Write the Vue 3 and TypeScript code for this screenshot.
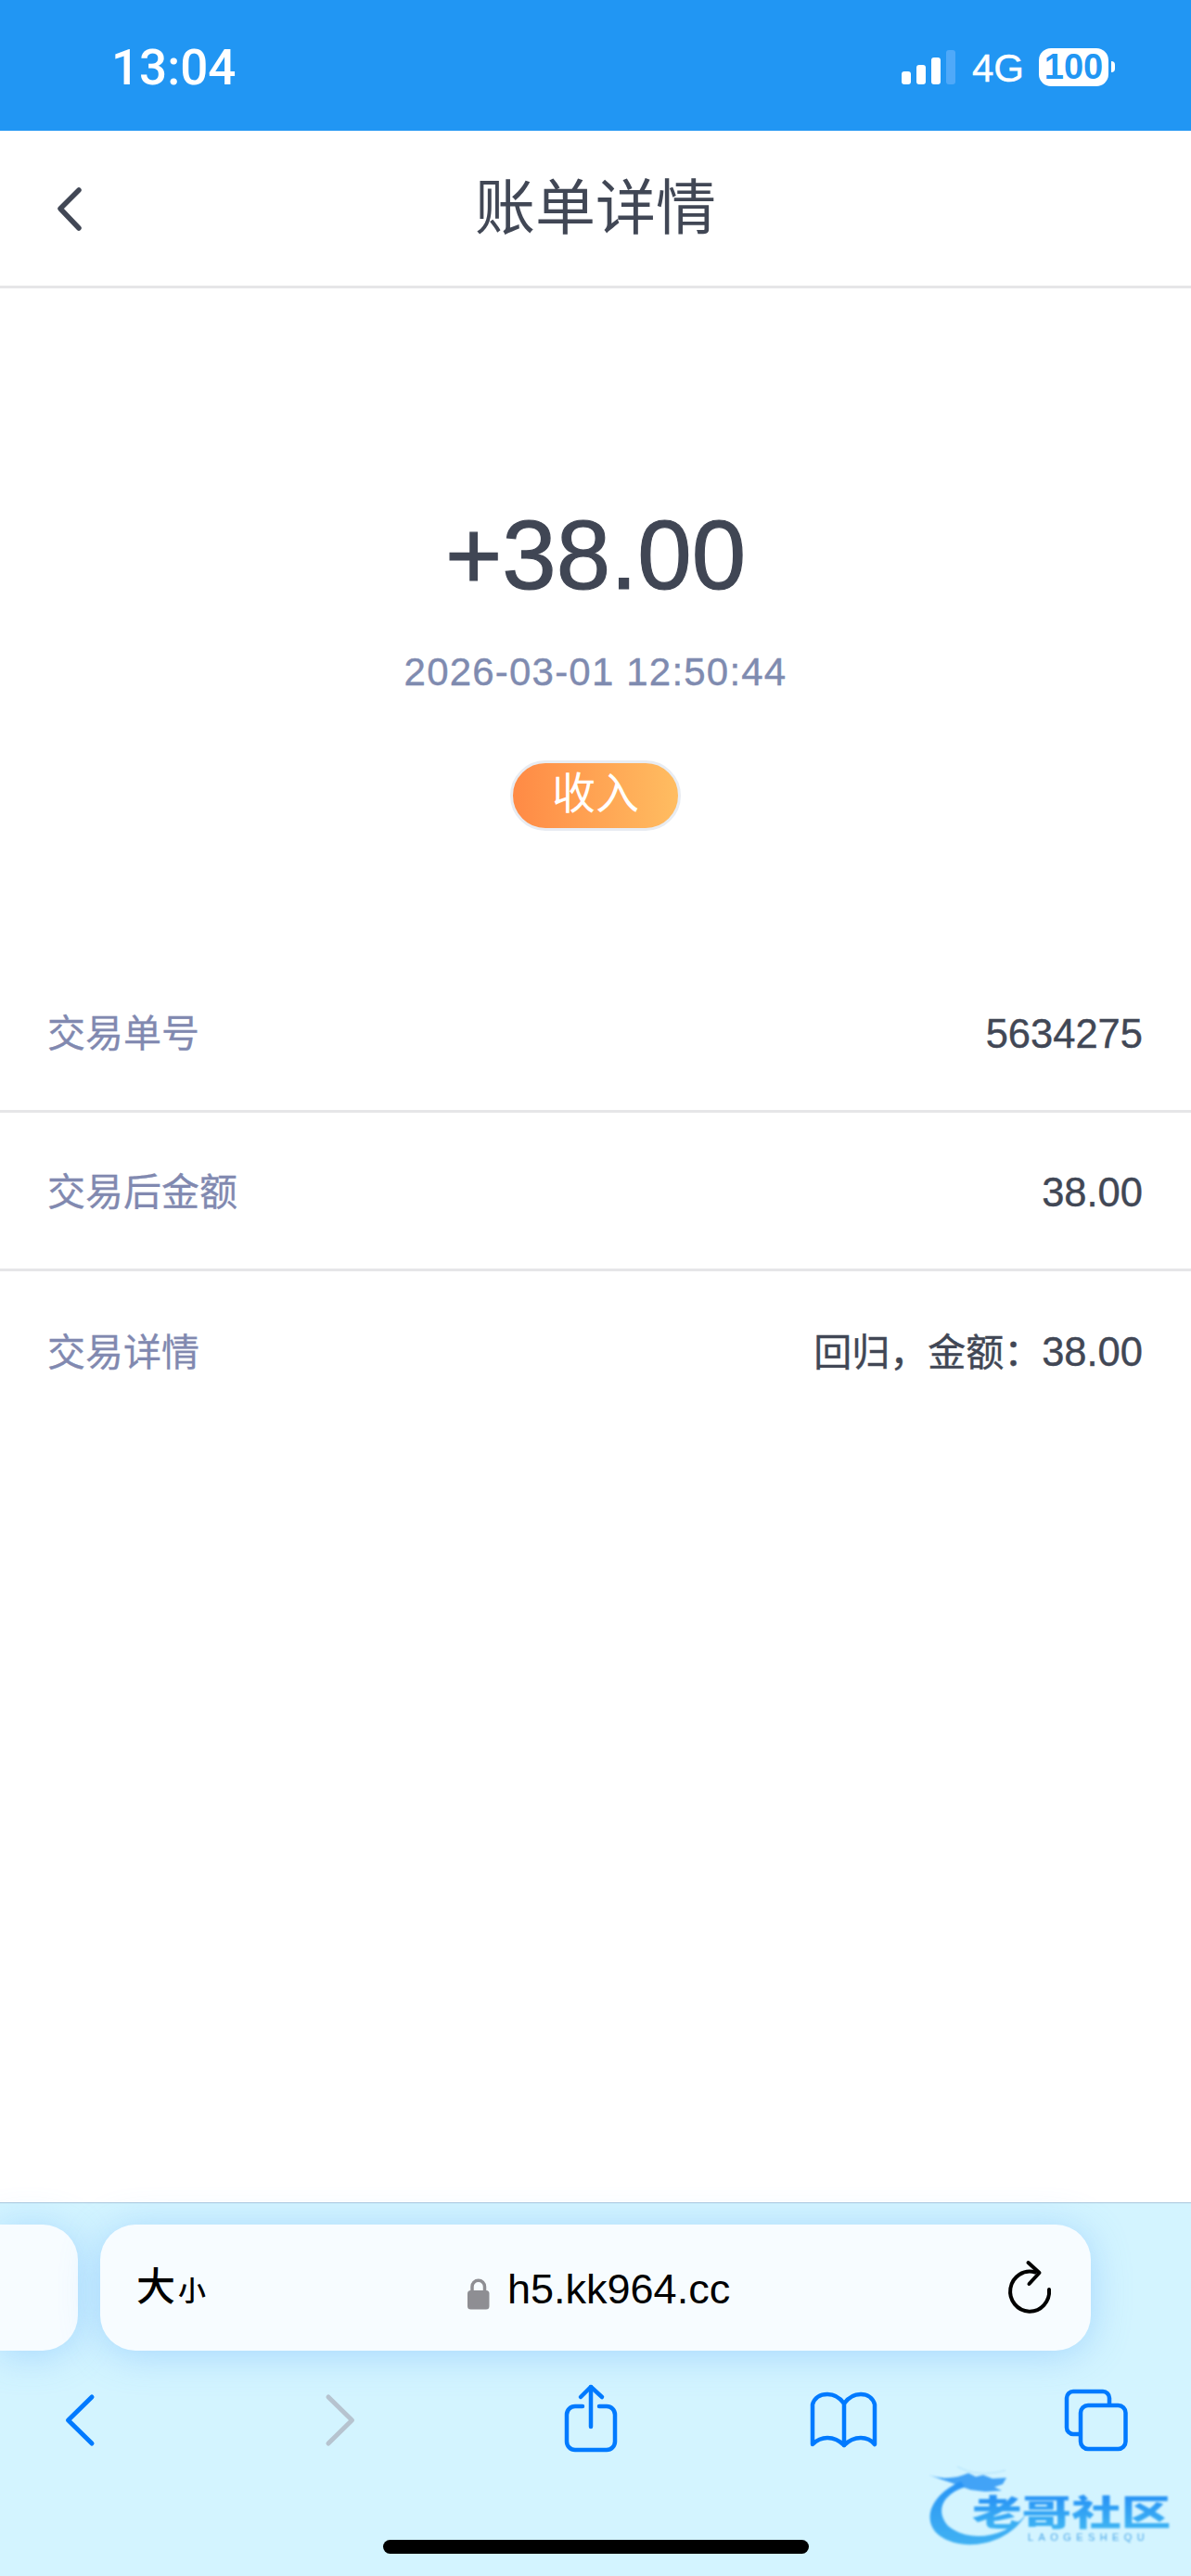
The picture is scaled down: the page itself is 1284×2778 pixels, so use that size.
<script setup lang="ts">
interface BillRow {
  label: string
  prefix?: string
  value: string
}

const rows: BillRow[] = [
  { label: '交易单号', value: '5634275' },
  { label: '交易后金额', value: '38.00' },
  { label: '交易详情', prefix: '回归，金额：', value: '38.00' },
]
</script>

<template>
  <div class="page">
    <!-- Status bar -->
    <div class="status">
      <span class="time">13:04</span>
      <div class="status-right">
        <div class="signal">
          <i class="b1"></i><i class="b2"></i><i class="b3"></i><i class="b4"></i>
        </div>
        <span class="net">4G</span>
        <div class="battery">100</div>
        <i class="battery-tip"></i>
      </div>
    </div>

    <!-- Header -->
    <header class="nav">
      <svg class="back" width="30" height="50" viewBox="60 200 30 50" fill="none" stroke="#414755" stroke-width="5.5" stroke-linecap="round" stroke-linejoin="round">
        <path d="M85 205L65 225L85 246" />
      </svg>
      <h1 class="title">账单详情</h1>
    </header>

    <!-- Amount -->
    <section class="hero">
      <div class="amount">+38.00</div>
      <div class="date">2026-03-01 12:50:44</div>
      <div class="tag">收入</div>
    </section>

    <!-- Detail rows -->
    <section class="list">
      <div v-for="row in rows" :key="row.label" class="row">
        <span class="label">{{ row.label }}</span>
        <span class="value"><span v-if="row.prefix" class="prefix">{{ row.prefix }}</span>{{ row.value }}</span>
      </div>
    </section>

    <div class="spacer"></div>

    <!-- Safari toolbar -->
    <footer class="browser">
      <div class="tabs-row">
        <div class="side-card"></div>
        <div class="address">
          <span class="aa">大<small>小</small></span>
          <div class="url">
            <svg width="24" height="34" viewBox="504 2450 24 34">
              <path d="M509 2464v-5a6.5 6.5 0 0 1 13.500 0v5" fill="none" stroke="#8e8e93" stroke-width="3.500" />
              <rect x="504" y="2463" width="23.500" height="20.500" rx="3.500" fill="#8e8e93" />
            </svg>
            <span>h5.kk964.cc</span>
          </div>
          <svg class="reload" width="50" height="60" viewBox="1085 2436 50 60" fill="none" stroke="#000" stroke-width="4" stroke-linecap="round" stroke-linejoin="round">
            <path d="M1131 2468A21 21.500 0 1 1 1116 2449.500" />
            <path d="M1108.500 2439L1120.500 2450L1109.500 2462" />
          </svg>
        </div>
      </div>

      <div class="toolbar">
        <svg width="70" height="80" viewBox="51 2570 70 80" fill="none" stroke="#007aff" stroke-width="5" stroke-linecap="round" stroke-linejoin="round">
          <path d="M99 2585L73.500 2610L99 2635" />
        </svg>
        <svg width="70" height="80" viewBox="325 2570 70 80" fill="none" stroke="#b6c3cf" stroke-width="5" stroke-linecap="round" stroke-linejoin="round">
          <path d="M354 2585L379.500 2610L354 2635" />
        </svg>
        <svg width="70" height="80" viewBox="598 2570 70 80" fill="none" stroke="#007aff" stroke-width="4.500" stroke-linecap="round" stroke-linejoin="round">
          <path d="M627 2595H619a9 9 0 0 0 -9 9V2633a9 9 0 0 0 9 9H653a9 9 0 0 0 9 -9V2604a9 9 0 0 0 -9 -9H645" />
          <path d="M636 2617V2574" />
          <path d="M625 2585L636 2574L648 2585" />
        </svg>
        <svg width="70" height="80" viewBox="872 2570 70 80" fill="none" stroke="#007aff" stroke-width="4.500" stroke-linecap="round" stroke-linejoin="round">
          <path d="M910 2592C905 2585 899 2582 892 2582C884 2582 878 2586 876 2593V2636C881 2631 886 2629 892 2629C899 2629 905 2632 910 2637C915 2632 921 2629 928 2629C934 2629 939 2631 943 2636V2593C941 2586 935 2582 928 2582C921 2582 915 2585 910 2592Z" />
          <path d="M910 2592V2637" />
        </svg>
        <svg width="70" height="80" viewBox="1146 2570 70 80" fill="none" stroke="#007aff" stroke-width="4.500" stroke-linejoin="round">
          <path d="M1196 2594V2586a7 7 0 0 0 -7 -7H1157a7 7 0 0 0 -7 7V2618a7 7 0 0 0 7 7H1165" />
          <rect x="1165" y="2594" width="48.500" height="47" rx="8" />
        </svg>
      </div>

      <div class="home"></div>

      <!-- Watermark -->
      <div class="mark">
        <svg class="dragon" width="120" height="100" viewBox="995 2652 120 100">
          <defs>
            <linearGradient id="ring" x1="0" y1="0" x2="0" y2="1">
              <stop offset="0" stop-color="#1a8cf5" />
              <stop offset="1" stop-color="#35adf2" />
            </linearGradient>
          </defs>
          <path d="M1036 2676C1008 2688 994 2712 1008 2730C1028 2752 1082 2750 1106 2712C1082 2738 1044 2742 1022 2724C1008 2708 1016 2690 1040 2682Z" fill="url(#ring)" />
          <path d="M1001 2669C1018 2674 1030 2673 1044 2667L1052 2671L1060 2669L1070 2673L1085 2672L1081 2679L1072 2682L1080 2686L1062 2687L1046 2685L1030 2679Z" fill="#1a8cf5" opacity="0.85" />
          <path d="M1032 2660C1050 2670 1070 2668 1084 2664" fill="none" stroke="#a9dcf8" stroke-width="1" />
        </svg>
        <span class="mark-name">老哥社区</span>
        <span class="mark-en">LAOGESHEQU</span>
      </div>
    </footer>
  </div>
</template>

<style>
html,
body {
  margin: 0;
  background: #fff;
}
</style>

<style scoped>
.page {
  width: 1284px;
  height: 2778px;
  display: flex;
  flex-direction: column;
  overflow: hidden;
  font-family: "Liberation Sans", "Noto Sans CJK SC", sans-serif;
  color: #414755;
  background: #fff;
}

.status {
  height: 141px;
  flex: none;
  background: #2196f3;
  color: #fff;
  display: flex;
  justify-content: space-between;
  box-sizing: border-box;
  padding: 45px 82px 0 120px;
}

.time {
  font-family: Roboto, sans-serif;
  font-weight: 500;
  font-size: 53px;
  line-height: 56px;
}

.status-right {
  display: flex;
  align-items: flex-start;
}

.signal {
  display: flex;
  align-items: flex-end;
  gap: 6px;
  height: 37px;
  margin-top: 9px;
}

.signal i {
  width: 10px;
  background: #fff;
  border-radius: 3px;
}

.b1 { height: 14px; }
.b2 { height: 21px; }
.b3 { height: 29px; }
.signal .b4 {
  height: 37px;
  background: #4fa9f9;
}

.net {
  font-size: 42px;
  line-height: 44px;
  margin: 7px 16px 0 18px;
  -webkit-text-stroke: 0.4px #fff;
}

.battery {
  width: 75px;
  height: 41px;
  margin-top: 7px;
  background: #fff;
  border-radius: 13px;
  color: #2196f3;
  font-weight: 700;
  font-size: 38px;
  line-height: 41px;
  text-align: center;
}

.battery-tip {
  width: 4px;
  height: 12px;
  margin: 21px 0 0 3px;
  background: #fff;
  border-radius: 0 6px 6px 0;
}

.nav {
  height: 170px;
  flex: none;
  box-sizing: border-box;
  border-bottom: 3px solid #e6e6e8;
  display: grid;
  grid-template-columns: 1fr auto 1fr;
  align-items: center;
}

.back {
  margin-left: 60px;
}

.title {
  margin: 0;
  font-size: 65px;
  font-weight: 400;
  line-height: 90px;
  color: #414755;
}

.hero {
  height: 718px;
  flex: none;
  box-sizing: border-box;
  padding-top: 228px;
  display: flex;
  flex-direction: column;
  align-items: center;
}

.amount {
  font-size: 105px;
  line-height: 120px;
  color: #404654;
  -webkit-text-stroke: 1.2px #404654;
}

.date {
  margin-top: 42px;
  font-size: 42px;
  line-height: 48px;
  letter-spacing: 1.2px;
  color: #7f8bb0;
  -webkit-text-stroke: 0.4px #7f8bb0;
}

.tag {
  margin-top: 71px;
  width: 178px;
  height: 70px;
  border: 3px solid #e8ecf2;
  border-radius: 38px;
  background: linear-gradient(90deg, #ff8a45, #ffbd61);
  color: #fff;
  font-size: 47px;
  font-weight: 400;
  line-height: 66px;
  text-align: center;
}

.row {
  height: 171px;
  box-sizing: border-box;
  padding: 4px 52px 0 51px;
  display: flex;
  justify-content: space-between;
  align-items: center;
  border-bottom: 3px solid #e6e6e8;
}

.row:last-child {
  border-bottom: none;
}

.label {
  font-size: 41px;
  line-height: 50px;
  color: #8189b0;
  -webkit-text-stroke: 0.3px #8189b0;
}

.value {
  font-size: 43.5px;
  line-height: 50px;
  color: #414755;
  -webkit-text-stroke: 0.4px #414755;
}

.prefix {
  font-size: 41px;
}

.spacer {
  flex: 1;
}

.browser {
  position: relative;
  height: 403px;
  flex: none;
  box-sizing: border-box;
  border-top: 1px solid #a9c8de;
  background: #d3f4ff;
  display: flex;
  flex-direction: column;
}

.tabs-row {
  display: flex;
  gap: 24px;
  padding-top: 23px;
}

.side-card {
  width: 84px;
  height: 136px;
  background: #f7fcff;
  border-radius: 0 38px 38px 0;
  box-shadow: 0 4px 40px rgba(110, 180, 250, 0.45);
}

.address {
  width: 1068px;
  height: 136px;
  background: #f7fcff;
  border-radius: 38px;
  box-shadow: 0 4px 40px rgba(110, 180, 250, 0.45);
  display: flex;
  align-items: center;
  justify-content: space-between;
  position: relative;
  box-sizing: border-box;
  padding: 0 41px 0 39px;
}

.aa {
  font-size: 42px;
  font-weight: 500;
  color: #000;
  line-height: 48px;
  margin-top: 4px;
}

.aa small {
  font-size: 30px;
  margin-left: 3px;
}

.url {
  position: absolute;
  left: 396px;
  top: 48px;
  display: flex;
  align-items: flex-end;
  gap: 19px;
  color: #000;
  font-size: 45px;
  line-height: 44px;
}

.toolbar {
  margin-top: 35px;
  padding: 0 68px 0 51px;
  display: flex;
  justify-content: space-between;
}

.toolbar svg {
  overflow: visible;
}

.home {
  width: 459px;
  height: 15px;
  margin: 89px auto 0;
  background: #000;
  border-radius: 8px;
}

.mark {
  position: absolute;
  left: 995px;
  top: 276px;
  width: 289px;
  height: 100px;
  filter: blur(1px);
  opacity: 0.92;
}

.dragon {
  position: absolute;
  left: 0;
  top: 0;
}

.mark-name {
  position: absolute;
  left: 53px;
  top: 36px;
  white-space: nowrap;
  font-size: 38px;
  line-height: 44px;
  font-weight: 900;
  transform: scaleX(1.41);
  transform-origin: left center;
  background: linear-gradient(180deg, #1787f5, #36b4f2);
  -webkit-background-clip: text;
  background-clip: text;
  color: transparent;
}

.mark-en {
  position: absolute;
  left: 113px;
  top: 78px;
  font-size: 11px;
  line-height: 12px;
  letter-spacing: 5.4px;
  color: #3f9fe6;
  white-space: nowrap;
}
</style>
